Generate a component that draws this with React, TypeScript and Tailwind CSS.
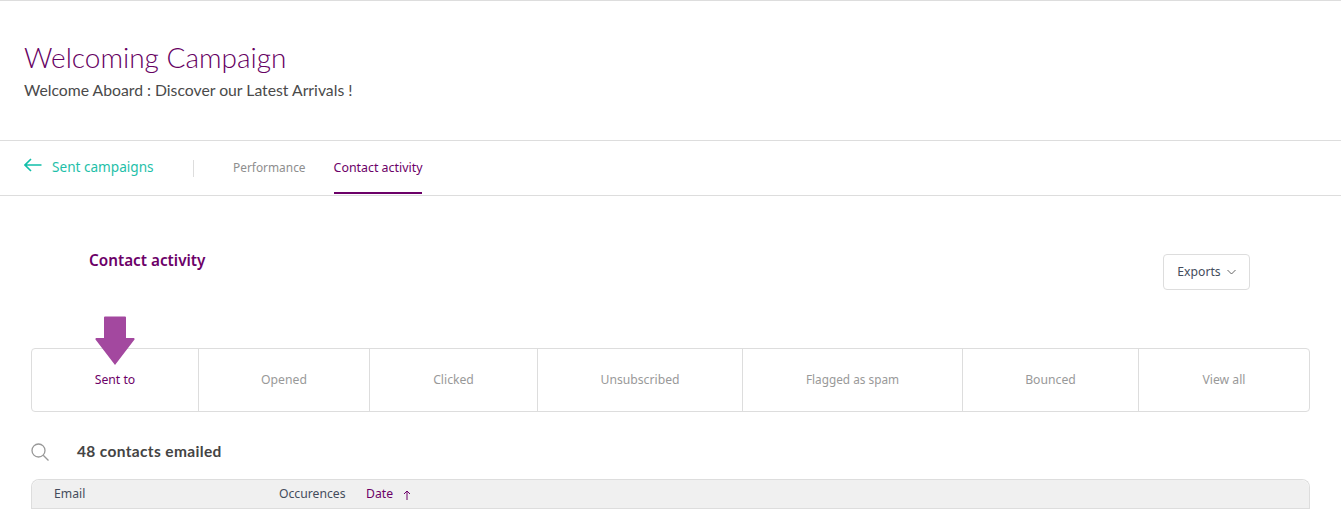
import React from "react";

const tabs = [
  { label: "Sent to", width: "w-[167px]", size: "text-[12.2px]", active: true },
  { label: "Opened", width: "w-[171px]", size: "text-[12.2px]" },
  { label: "Clicked", width: "w-[168px]", size: "text-[12.2px]" },
  { label: "Unsubscribed", width: "w-[205px]", size: "text-[12.2px]" },
  { label: "Flagged as spam", width: "w-[220px]", size: "text-[11.8px]" },
  { label: "Bounced", width: "w-[176px]", size: "text-[12.2px]" },
  { label: "View all", width: "flex-1", size: "text-[12.2px]" },
];

const sans = "font-['Noto_Sans',sans-serif]";

const App: React.FC = () => {
  return (
    <div className={`w-[1341px] h-[516px] overflow-hidden bg-white ${sans}`}>
      <header className="h-[141px] border-t border-b border-[#dddddd] pt-[38px] pl-6">
        <h1 className="font-['Lato',sans-serif] font-light text-[28px] leading-[36px] text-[#660062]">Welcoming Campaign</h1>
        <p className="font-['Lato',sans-serif] text-[15.75px] leading-[20px] mt-[5px] text-[#4a4a4a]">Welcome Aboard : Discover our Latest Arrivals !</p>
      </header>

      <nav className="h-[55px] border-b border-[#dddddd] flex items-center pl-6">
        <a className="flex items-center w-[169px] pb-[2px] text-[13.6px] text-[#1ebfa9]">
          <svg width="18" height="14" viewBox="0 0 18 14" fill="none" stroke="#10bfa9" strokeWidth="1.6" className="mr-[10px] -mt-[3px]">
            <path d="M17.5 7H1M7 1L1 7l6 6" />
          </svg>
          Sent campaigns
        </a>
        <div className="w-px h-[17px] bg-[#dddddd]" />
        <div className="flex ml-[39px] h-full">
          <a className="flex items-center text-[11.9px] text-[#8e8e8e] mr-[28px]">Performance</a>
          <a className="flex items-center text-[12.4px] text-[#6c0068] border-b-2 border-[#6c0068] pt-[4px] h-[53px]">Contact activity</a>
        </div>
      </nav>

      <section className="flex items-start justify-between pl-[89px] pr-[91px] pt-[53px] h-[152px]">
        <h2 className="text-[15.3px] leading-[22px] font-semibold text-[#6c0068]">Contact activity</h2>
        <button className="flex items-center justify-center w-[87px] h-[36px] mt-[5px] border border-[#dddddd] rounded text-[12.2px] text-[#444c5c]">
          Exports
          <svg width="9" height="6" viewBox="0 0 9 6" fill="none" stroke="#555" strokeWidth="0.9" className="ml-[6px]">
            <path d="M.5 1l4 4 4-4" />
          </svg>
        </button>
      </section>

      <div className="relative mx-[31px] w-[1279px] h-[64px] flex border border-[#dddddd] rounded">
        {tabs.map((t, i) => (
          <div
            key={t.label}
            className={`${t.width} ${t.size} flex items-center justify-center ${i < tabs.length - 1 ? "border-r border-[#dddddd]" : ""} ${t.active ? "text-[#6c0068]" : "text-[#999999]"}`}
          >
            {t.label}
          </div>
        ))}
        <svg width="40" height="50" viewBox="0 0 40 50" className="absolute left-[63px] -top-[33px]">
          <path d="M9 1.5a1 1 0 0 1 1-1h20a1 1 0 0 1 1 1V22h7.5a1 1 0 0 1 1 1.5L20 49 .5 23.5a1 1 0 0 1 1-1.5H9z" fill="#a3489f" />
        </svg>
      </div>

      <div className="flex items-center mx-[31px] mt-[28px] h-[22px]">
        <svg width="18" height="18" viewBox="0 0 18 18" fill="none" stroke="#999999" strokeWidth="1.3" className="mt-[2px]">
          <circle cx="7.5" cy="7.5" r="6.5" />
          <path d="M12.2 12.2L17.5 17.5" />
        </svg>
        <span className="ml-[28px] mt-[2px] font-['Lato',sans-serif] font-bold text-[15.5px] tracking-[0.35px] text-[#444444]">48 contacts emailed</span>
      </div>

      <div className="mx-[31px] w-[1279px] mt-[17px] border-x border-t border-[#dddddd] rounded-t-lg">
        <div className="flex items-center h-[29px] bg-[#f0f0f0] border-b border-[#dddddd] rounded-t-lg text-[12.2px] text-[#444c5c] pl-[22px]">
          <span className="w-[225px]">Email</span>
          <span className="w-[87px]">Occurences</span>
          <span className="text-[#6c0068]">Date</span>
          <svg width="8" height="10" viewBox="0 0 8 10" fill="none" stroke="#6c0068" strokeWidth="1" className="ml-[10px] mt-[2px]">
            <path d="M4 10V1M1 4l3-3 3 3" />
          </svg>
        </div>
      </div>
    </div>
  );
};

export default App;
